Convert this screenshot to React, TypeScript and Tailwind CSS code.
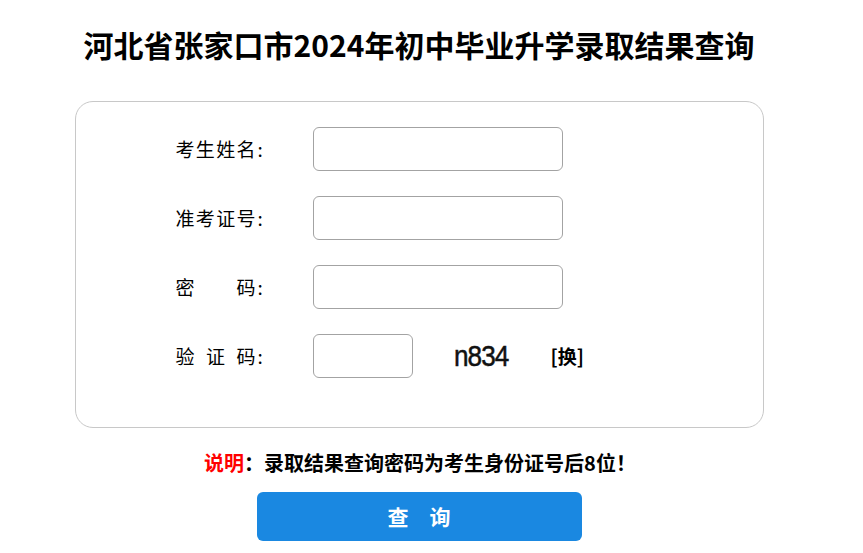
import { useState } from 'react';

const font = { fontFamily: '"Microsoft YaHei", "Noto Sans CJK SC", sans-serif' };

const Label = ({ chars }: { chars: string[] }) => (
  <div className="flex w-[137px] shrink-0 items-center text-[19px] text-black">
    <span className="flex w-[80px] justify-between">
      {chars.map((c, i) => (
        <span key={i}>{c}</span>
      ))}
    </span>
    <span className="ml-[2px]">:</span>
  </div>
);

const inputCls =
  'h-[44px] rounded-[6px] border border-[#a3a3a3] bg-white px-3 text-base outline-none focus:border-[#1a88e1]';

export default function App() {
  const [name, setName] = useState('');
  const [ticket, setTicket] = useState('');
  const [pwd, setPwd] = useState('');
  const [code, setCode] = useState('');

  return (
    <div className="min-h-[553px] w-[838px] bg-white" style={font}>
      <h1 className="pt-[24px] text-center text-[30px] font-bold leading-[40px] text-black">
        河北省张家口市2024年初中毕业升学录取结果查询
      </h1>

      <div className="mx-auto mt-[37px] w-[689px] rounded-[18px] border border-[#c8c8c8] pb-[49px] pl-[100px] pt-[25px]">
        <div className="flex flex-col gap-[25px]">
          <div className="flex items-center">
            <Label chars={['考', '生', '姓', '名']} />
            <input className={`${inputCls} w-[250px]`} value={name} onChange={(e) => setName(e.target.value)} />
          </div>
          <div className="flex items-center">
            <Label chars={['准', '考', '证', '号']} />
            <input className={`${inputCls} w-[250px]`} value={ticket} onChange={(e) => setTicket(e.target.value)} />
          </div>
          <div className="flex items-center">
            <Label chars={['密', '码']} />
            <input
              type="password"
              className={`${inputCls} w-[250px]`}
              value={pwd}
              onChange={(e) => setPwd(e.target.value)}
            />
          </div>
          <div className="flex items-center">
            <Label chars={['验', '证', '码']} />
            <input className={`${inputCls} w-[100px]`} value={code} onChange={(e) => setCode(e.target.value)} />
            <span
              className="ml-[41px] inline-block w-[62px] origin-left scale-x-[0.9] text-[29px] font-normal leading-none tracking-[-1px] text-[#111] [-webkit-text-stroke:0.5px_#111]"
              style={{ fontFamily: '"Liberation Sans", Arial, sans-serif' }}
            >
              n834
            </span>
            <button className="ml-[35px] cursor-pointer text-[19px] font-bold text-black">[换]</button>
          </div>
        </div>
      </div>

      <p className="mt-[20px] pl-[6px] pr-[4px] text-center text-[20px] font-bold leading-[30px] text-black">
        <span className="text-[#ff0000]">说明</span>：录取结果查询密码为考生身份证号后8位！
      </p>

      <div className="mt-[14px] flex justify-center">
        <button className="h-[49px] w-[325px] cursor-pointer rounded-[6px] bg-[#1a88e1] text-[21px] font-bold text-white">
          查　询
        </button>
      </div>
    </div>
  );
}
